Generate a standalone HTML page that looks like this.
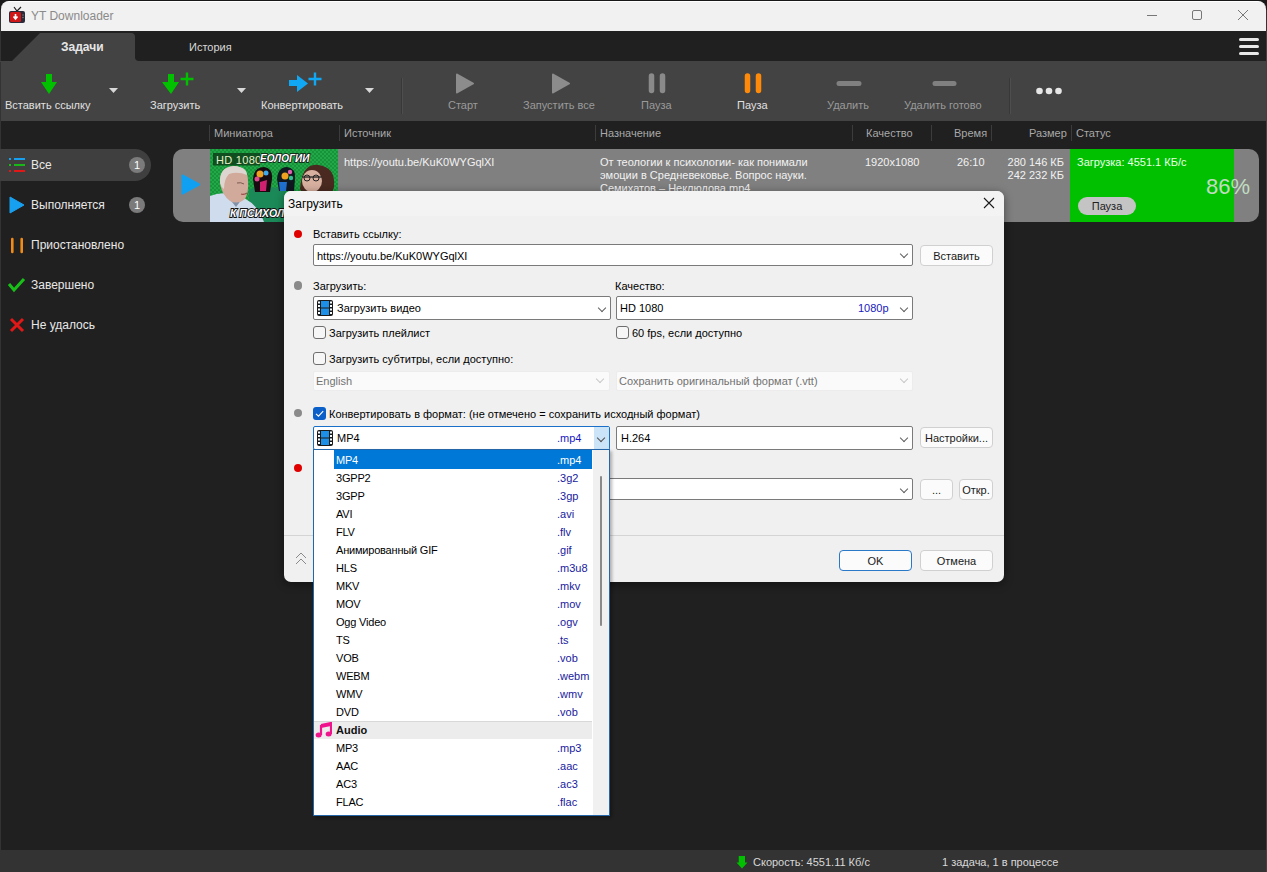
<!DOCTYPE html>
<html><head><meta charset="utf-8">
<style>
*{margin:0;padding:0;box-sizing:border-box}
html,body{width:1267px;height:872px;overflow:hidden;background:#333}
body{position:relative;font-family:"Liberation Sans",sans-serif;font-size:11px;line-height:13px}
.a{position:absolute;white-space:nowrap}
.tl{color:#e0e0e0;top:99px}
.td{color:#9a9a9a}
.hd{color:#a8a8a8;top:127px}
.sep{position:absolute;top:125px;width:1px;height:16px;background:#3c3c3c}
.side{color:#e8e8e8;font-size:12px;line-height:14px;left:31px}
.badge{position:absolute;width:16px;height:16px;border-radius:8px;background:#7b7b7b;color:#fff;font-size:11px;text-align:center;line-height:16px}
.rt{color:#f2f2f2}
.lbl{color:#000}
.cb{position:absolute;background:#fff;border:1px solid #7a7a7a;border-radius:2px}
.chev{position:absolute;width:6px;height:6px;border-right:1px solid #606060;border-bottom:1px solid #606060;transform:rotate(45deg)}
.btn{position:absolute;background:#fbfbfb;border:1px solid #d0d0d0;border-radius:4px;color:#1a1a1a;text-align:center}
.chk{position:absolute;width:13px;height:13px;border:1px solid #6e6e6e;border-radius:3px;background:#f6f6f6}
.dot{position:absolute;width:8.6px;height:8.6px;border-radius:50%}
.li{position:absolute;left:336px;color:#000;letter-spacing:-.2px}
.ext{position:absolute;left:557px;color:#1a1aa0}
</style></head><body>
<!-- title bar -->
<div class="a" style="left:0;top:0;width:1267px;height:1px;background:#181818"></div><div class="a" style="left:0;top:0;width:10px;height:10px;background:#181818"></div><div class="a" style="left:1257px;top:0;width:10px;height:10px;background:#181818"></div><div class="a" style="left:1px;top:1px;width:1265px;height:30px;background:#f1f1f1;border-top:1px solid #fff;border-radius:8px 8px 0 0"></div>
<svg class="a" style="left:8px;top:6px" width="18" height="18" viewBox="0 0 18 18">
 <path d="M6 1 L9 5 L13 1" stroke="#222" stroke-width="1.2" fill="none"/>
 <rect x="1" y="5" width="16" height="12" rx="2" fill="#2a2a3a"/>
 <rect x="2" y="6" width="11" height="10" rx="1.5" fill="#d01818"/>
 <path d="M7.5 8 V12 M5.5 10.5 L7.5 13 L9.5 10.5" stroke="#fff" stroke-width="1.6" fill="none"/>
 <circle cx="15" cy="9" r=".7" fill="#888"/><circle cx="15" cy="11.5" r=".7" fill="#888"/>
</svg>
<div class="a" style="left:31px;top:9px;font-size:12px;line-height:14px;color:#8a8a8a">YT Downloader</div>
<div class="a" style="left:1147px;top:15px;width:10px;height:1px;background:#777"></div>
<div class="a" style="left:1192px;top:10px;width:10px;height:10px;border:1px solid #777;border-radius:2px"></div>
<svg class="a" style="left:1237px;top:9px" width="12" height="12"><path d="M1 1 L11 11 M11 1 L1 11" stroke="#777" stroke-width="1"/></svg>

<!-- tab bar -->
<div class="a" style="left:1px;top:31px;width:1265px;height:30px;background:#202020"></div>
<svg class="a" style="left:0;top:31px" width="150" height="31">
 <path d="M12 30 L40 2 L131 2 Q135 2 135 6 L135 26 Q135 30 139 30 L150 30 L150 31 L0 31 L0 30 Z" fill="#434343"/>
</svg>
<div class="a" style="left:61px;top:40px;font-size:12px;line-height:14px;font-weight:bold;color:#e6e6e6">Задачи</div>
<div class="a" style="left:189px;top:41px;color:#d8d8d8">История</div>
<div class="a" style="left:1239px;top:38px;width:20px;height:3px;border-radius:2px;background:#e8e8e8"></div>
<div class="a" style="left:1239px;top:45px;width:20px;height:3px;border-radius:2px;background:#e8e8e8"></div>
<div class="a" style="left:1239px;top:52px;width:20px;height:3px;border-radius:2px;background:#e8e8e8"></div>

<!-- toolbar -->
<div class="a" style="left:1px;top:61px;width:1265px;height:60px;background:#434343"></div>
<svg class="a" style="left:0;top:61px" width="1267" height="60">
 <g fill="#00c000">
  <path d="M46 13 H52 V21 H57 L49 33 L41 21 H46 Z"/>
  <path d="M168 13 H174 V21 H179 L171 33 L162 21 H168 Z"/>
  <path d="M185.8 11.5 H188.2 V16.8 H193.5 V19.2 H188.2 V24.5 H185.8 V19.2 H180.5 V16.8 H185.8 Z"/>
 </g>
 <g fill="#10a8f5">
  <path d="M289 19 H297 V14 L308 22.5 L297 31 V25 H289 Z"/>
  <path d="M313.8 11.5 H316.2 V16.8 H321.5 V19.2 H316.2 V24.5 H313.8 V19.2 H308.5 V16.8 H313.8 Z"/>
 </g>
 <g fill="#d8d8d8">
  <path d="M109 27 H118 L113.5 32 Z"/>
  <path d="M237 27 H246 L241.5 32 Z"/>
  <path d="M365 27 H374 L369.5 32 Z"/>
 </g>
 <rect x="401" y="17" width="1" height="36" fill="#383838"/><rect x="402" y="17" width="1" height="36" fill="#4e4e4e"/>
 <rect x="1009" y="17" width="1" height="36" fill="#383838"/><rect x="1010" y="17" width="1" height="36" fill="#4e4e4e"/>
 <g fill="#8c8c8c" stroke="#8c8c8c" stroke-width="2" stroke-linejoin="round">
  <path d="M457 13.5 L473 22.5 L457 31.5 Z"/>
  <path d="M553 13.5 L569 22.5 L553 31.5 Z"/>
 </g>
 <g stroke="#8a8a8a" stroke-width="5.5" stroke-linecap="round">
  <path d="M651.5 15 V29.5 M662.5 15 V29.5"/>
 </g>
 <g stroke="#ff8a0a" stroke-width="5.5" stroke-linecap="round">
  <path d="M747.5 15 V29.5 M758.5 15 V29.5"/>
 </g>
 <g stroke="#808080" stroke-width="5" stroke-linecap="round">
  <path d="M839 22.5 H859 M935 22.5 H954"/>
 </g>
 <g fill="#e6e6e6">
  <circle cx="1039.5" cy="30" r="3.3"/><circle cx="1049" cy="30" r="3.3"/><circle cx="1058.5" cy="30" r="3.3"/>
 </g>
</svg>
<div class="a tl" style="left:5px">Вставить ссылку</div>
<div class="a tl" style="left:150px">Загрузить</div>
<div class="a tl" style="left:261px">Конвертировать</div>
<div class="a tl td" style="left:448px">Старт</div>
<div class="a tl td" style="left:523px">Запустить все</div>
<div class="a tl td" style="left:641px">Пауза</div>
<div class="a tl" style="left:737px">Пауза</div>
<div class="a tl td" style="left:827px">Удалить</div>
<div class="a tl td" style="left:904px">Удалить готово</div>

<!-- main area -->
<div class="a" style="left:1px;top:121px;width:1265px;height:729px;background:#202020"></div>
<div class="a" style="left:1266px;top:31px;width:1px;height:841px;background:#454040"></div>
<div class="a hd" style="left:214px">Миниатюра</div>
<div class="a hd" style="left:344px">Источник</div>
<div class="a hd" style="left:600px">Назначение</div>
<div class="a hd" style="left:866px">Качество</div>
<div class="a hd" style="left:954px">Время</div>
<div class="a hd" style="left:1029px">Размер</div>
<div class="a hd" style="left:1076px">Статус</div>
<div class="sep" style="left:209px"></div>
<div class="sep" style="left:339px"></div>
<div class="sep" style="left:595px"></div>
<div class="sep" style="left:852px"></div>
<div class="sep" style="left:931px"></div>
<div class="sep" style="left:991px"></div>
<div class="sep" style="left:1071px"></div>

<!-- sidebar -->
<div class="a" style="left:0;top:149px;width:151px;height:32px;background:#3f3f3f;border-radius:0 16px 16px 0"></div>
<svg class="a" style="left:0;top:149px" width="30" height="200">
 <g stroke-width="2.2" stroke-linecap="butt">
  <path d="M9 10 H11 M14 10 H25" stroke="#18a0f0"/>
  <path d="M9 16 H11 M14 16 H25" stroke="#18b818"/>
  <path d="M9 22 H11 M14 22 H25" stroke="#e01818"/>
 </g>
 <path d="M10 48 L24 56 L10 64 Z" fill="#18a0f0" stroke="#18a0f0" stroke-width="1" stroke-linejoin="round"/>
 <path d="M12.3 90 V103 M21.7 90 V103" stroke="#f08a18" stroke-width="2.6" stroke-linecap="round"/>
 <path d="M9 135 L14 141 L24 130" stroke="#18c018" stroke-width="3" fill="none"/>
 <path d="M11 170 L23 182 M23 170 L11 182" stroke="#e01818" stroke-width="3"/>
</svg>
<div class="a side" style="top:158px">Все</div>
<div class="a side" style="top:198px">Выполняется</div>
<div class="a side" style="top:238px">Приостановлено</div>
<div class="a side" style="top:278px">Завершено</div>
<div class="a side" style="top:318px">Не удалось</div>
<div class="badge" style="left:129px;top:157px">1</div>
<div class="badge" style="left:129px;top:197px">1</div>

<!-- task row -->
<div class="a" style="left:173px;top:149px;width:1086px;height:73px;background:#808080;border-radius:10px"></div>
<svg class="a" style="left:180px;top:173px" width="22" height="22"><path d="M2.5 2.5 L19 11.5 L2.5 20.5 Z" fill="#10a0f2" stroke="#10a0f2" stroke-width="2" stroke-linejoin="round"/></svg>
<svg class="a" style="left:210px;top:149px" width="128" height="73" viewBox="0 0 128 73">
 <defs><pattern id="ck" width="4" height="4" patternUnits="userSpaceOnUse"><rect width="4" height="4" fill="#22a848"/><rect width="2" height="2" fill="#17943a"/><rect x="2" y="2" width="2" height="2" fill="#17943a"/></pattern></defs>
 <rect width="128" height="73" fill="url(#ck)"/>
 <path d="M39 40 Q56 36 75 40 L75 73 L39 73 Z" fill="#1b8a58"/>
 <path d="M90 40 Q92 14 108 16 Q126 18 124 38 L122 44 L92 44 Z" fill="#4a2a20"/>
 <ellipse cx="102" cy="32" rx="10" ry="11" fill="#d8b0a0"/>
 <path d="M92 28 H112" stroke="#222" stroke-width="1.3"/>
 <circle cx="97" cy="29" r="3" fill="none" stroke="#222" stroke-width="1"/><circle cx="106" cy="29" r="3" fill="none" stroke="#222" stroke-width="1"/>
 <path d="M45 43 L43 30 Q44 18 54 18 Q63 19 62 30 L60 43 Z" fill="#180c10"/>
 <circle cx="50" cy="25" r="3.5" fill="#f0a020"/><circle cx="47" cy="30" r="2.5" fill="#e04890"/><circle cx="56" cy="24" r="2.5" fill="#40a8e8"/><path d="M50 33 L57 31 L56 42 L50 42 Z" fill="#d02070"/>
 <path d="M69 42 L67 30 Q68 18 77 18 Q86 19 85 30 L84 42 Z" fill="#101820"/>
 <circle cx="75" cy="27" r="3.5" fill="#f0a020"/><circle cx="80" cy="23" r="2.2" fill="#e060b0"/><circle cx="81" cy="29" r="2.2" fill="#30c090"/><path d="M69 33 L77 33 L76 42 L70 42 Z" fill="#2070d0"/>
 <path d="M0 47 Q12 42 24 46 Q46 50 54 73 L0 73 Z" fill="#cfdcee"/>
 <path d="M18 48 L26 58 L32 50 Z" fill="#8090a8"/>
 <path d="M10 34 Q9 18 24 17 Q38 18 38 32 Q39 42 35 50 Q28 56 20 52 Q12 46 10 34 Z" fill="#d2aa9c"/>
 <path d="M10 34 Q9 18 24 17 Q37 18 37 26 Q28 22 19 25 Q14 30 14 40 Q11 38 10 34 Z" fill="#ddd6d0"/>
 <path d="M27 34 Q31 33 34 35" stroke="#7a5a50" stroke-width="1" fill="none"/>
 <path d="M31 45 Q34 46 37 44" stroke="#9a4a4a" stroke-width="1.2" fill="none"/>
 <rect x="3" y="4" width="47" height="12.5" fill="#0d3a18" opacity=".8"/>
 <text x="6" y="14.5" font-family="Liberation Sans" font-size="11" fill="#e8f0c8" letter-spacing=".3">HD 1080</text>
 <text x="50" y="12.5" font-family="Liberation Sans" font-size="10" font-weight="bold" font-style="italic" fill="#fff" stroke="#111" stroke-width="1.6" paint-order="stroke">ЕОЛОГИИ</text>
 <text x="20" y="68" font-family="Liberation Sans" font-size="10.5" font-weight="bold" font-style="italic" fill="#fff" stroke="#111" stroke-width="1.8" paint-order="stroke">К ПСИХОЛ</text>
</svg>
<div class="a rt" style="left:344px;top:156px">https://youtu.be/KuK0WYGqlXI</div>
<div class="a rt" style="left:600px;top:156px;line-height:13px">От теологии к психологии- как понимали<br>эмоции в Средневековье. Вопрос науки.<br>Семихатов – Неклюдова.mp4</div>
<div class="a rt" style="left:865px;top:156px">1920x1080</div>
<div class="a rt" style="left:957px;top:156px">26:10</div>
<div class="a rt" style="left:1000px;top:156px;width:64px;text-align:right">280 146 КБ<br>242 232 КБ</div>
<div class="a" style="left:1070px;top:149px;width:164px;height:73px;background:#00c000"></div>
<div class="a" style="left:1077px;top:156px;color:#e8ffe8">Загрузка: 4551.1 КБ/с</div>
<div class="a" style="left:1206px;top:175px;font-size:22px;line-height:24px;color:#c0dcc0">86%</div>
<div class="a" style="left:1078px;top:197px;width:58px;height:18px;border-radius:9px;background:#c4c4c4;color:#222;text-align:center;line-height:18px">Пауза</div>

<!-- status bar -->
<div class="a" style="left:1px;top:850px;width:1265px;height:22px;background:#333333"></div>
<svg class="a" style="left:736px;top:856px" width="12" height="14"><path d="M2.7 0 H9 V6.5 H11.5 L6 12.5 L0.5 6.5 H2.7 Z" fill="#00c000"/></svg>
<div class="a" style="left:753px;top:856px;color:#d8d8d8">Скорость: 4551.11 Кб/с</div>
<div class="a" style="left:942px;top:856px;color:#d8d8d8">1 задача, 1 в процессе</div>

<!-- dialog -->
<div id="dlg" class="a" style="left:284px;top:191px;width:720px;height:391px;background:#f0f0f0;border-radius:7px;box-shadow:0 2px 10px rgba(0,0,0,.45)"></div>
<div class="a" style="left:284px;top:191px;width:720px;height:25px;background:#f3f3f3;border-radius:7px 7px 0 0"></div>
<svg width="0" height="0" style="position:absolute"><defs><g id="film"><rect x="0" y="0" width="16" height="16" rx="2" fill="#1a1a1a"/><rect x="4" y="1" width="8" height="6.5" fill="#1e8fe6"/><rect x="4" y="8.5" width="8" height="6.5" fill="#1e8fe6"/><g fill="#fff"><rect x="1" y="1.5" width="2" height="2"/><rect x="1" y="5" width="2" height="2"/><rect x="1" y="8.5" width="2" height="2"/><rect x="1" y="12" width="2" height="2"/><rect x="13" y="1.5" width="2" height="2"/><rect x="13" y="5" width="2" height="2"/><rect x="13" y="8.5" width="2" height="2"/><rect x="13" y="12" width="2" height="2"/></g></g></defs></svg>

<div class="a" style="left:288px;top:197px;font-size:12px;line-height:14px;color:#000">Загрузить</div>
<svg class="a" style="left:983px;top:197px" width="12" height="12"><path d="M1 1 L11 11 M11 1 L1 11" stroke="#1a1a1a" stroke-width="1.1"/></svg>

<div class="dot" style="left:293.7px;top:229.9px;background:#e00000"></div>
<div class="a lbl" style="left:313px;top:228px">Вставить ссылку:</div>
<div class="cb" style="left:313px;top:244px;width:600px;height:22px"></div>
<div class="a lbl" style="left:317px;top:250px">https://youtu.be/KuK0WYGqlXI</div>
<div class="chev" style="left:901px;top:251px"></div>
<div class="btn" style="left:920px;top:245px;width:73px;height:21px;line-height:21px">Вставить</div>

<div class="dot" style="left:293.5px;top:281.4px;background:#8a8a8a"></div>
<div class="a lbl" style="left:313px;top:280px">Загрузить:</div>
<div class="a lbl" style="left:615px;top:280px">Качество:</div>
<div class="cb" style="left:313px;top:296px;width:298px;height:24px"></div>
<svg class="a film" style="left:317px;top:300px" width="16" height="16"><use href="#film"/></svg>
<div class="a lbl" style="left:337px;top:302px">Загрузить видео</div>
<div class="chev" style="left:599px;top:304.5px"></div>
<div class="cb" style="left:616px;top:296px;width:297px;height:24px"></div>
<div class="a lbl" style="left:620px;top:302px">HD 1080</div>
<div class="a" style="left:858px;top:302px;color:#1818c0">1080p</div>
<div class="chev" style="left:901px;top:304.5px"></div>

<div class="chk" style="left:313px;top:326px"></div>
<div class="a lbl" style="left:329px;top:327px">Загрузить плейлист</div>
<div class="chk" style="left:616px;top:326px"></div>
<div class="a lbl" style="left:632px;top:327px">60 fps, если доступно</div>

<div class="chk" style="left:313px;top:352px"></div>
<div class="a lbl" style="left:329px;top:353px">Загрузить субтитры, если доступно:</div>
<div class="a" style="left:313px;top:371px;width:297px;height:20px;background:#fafafa;border:1px solid #ececec;border-radius:2px"></div>
<div class="a" style="left:316px;top:375px;color:#727272">English</div>
<div class="chev" style="left:597px;top:376px;border-color:#c8c8c8"></div>
<div class="a" style="left:616px;top:371px;width:297px;height:20px;background:#fafafa;border:1px solid #ececec;border-radius:2px"></div>
<div class="a" style="left:619px;top:375px;color:#727272">Сохранить оригинальный формат (.vtt)</div>
<div class="chev" style="left:901px;top:376px;border-color:#c8c8c8"></div>

<div class="dot" style="left:293.7px;top:408.6px;background:#8a8a8a"></div>
<div class="a" style="left:313px;top:407px;width:13px;height:13px;border-radius:3px;background:#0b5fc8"></div>
<svg class="a" style="left:313px;top:407px" width="13" height="13"><path d="M3 6.8 L5.5 9.2 L10.2 4.2" stroke="#fff" stroke-width="1.1" fill="none"/></svg>
<div class="a lbl" style="left:329px;top:408px">Конвертировать в формат: (не отмечено = сохранить исходный формат)</div>
<div class="a" style="left:313px;top:426px;width:297px;height:24px;background:#fff;border:1px solid #1a70c8;border-radius:2px"></div>
<div class="a" style="left:594px;top:427px;width:15px;height:22px;background:#cce4f7"></div>
<svg class="a" style="left:317px;top:430px" width="16" height="16"><use href="#film"/></svg>
<div class="a lbl" style="left:337px;top:432px">MP4</div>
<div class="a" style="left:557px;top:432px;color:#1818c0">.mp4</div>
<div class="chev" style="left:598px;top:435px;border-color:#505050"></div>
<div class="cb" style="left:616px;top:426px;width:297px;height:24px"></div>
<div class="a lbl" style="left:621px;top:432px">H.264</div>
<div class="chev" style="left:901px;top:434.5px"></div>
<div class="btn" style="left:920px;top:427px;width:73px;height:21px;line-height:21px">Настройки...</div>

<div class="dot" style="left:293.6px;top:463.8px;background:#e00000"></div>
<div class="cb" style="left:313px;top:478px;width:600px;height:22px"></div>
<div class="chev" style="left:901px;top:486px"></div>
<div class="btn" style="left:920px;top:479px;width:33px;height:21px;line-height:21px">...</div>
<div class="btn" style="left:959px;top:479px;width:34px;height:21px;line-height:21px">Откр.</div>

<div class="a" style="left:284px;top:535px;width:720px;height:1px;background:#d4d4d4"></div>
<svg class="a" style="left:295px;top:552px" width="12" height="14"><path d="M1 6 L6 1 L11 6 M1 12 L6 7 L11 12" stroke="#8a8a8a" stroke-width="1" fill="none"/></svg>
<div class="btn" style="left:839px;top:550px;width:73px;height:21px;line-height:20px;border:1.5px solid #2a78c8">OK</div>
<div class="btn" style="left:920px;top:550px;width:73px;height:21px;line-height:21px">Отмена</div>

<!-- dropdown list -->
<div class="a" style="left:313px;top:449px;width:297px;height:367px;background:#fff;border:1px solid #2466a8;box-shadow:2px 2px 3px rgba(0,0,0,.28)"></div>
<div class="a" style="left:593px;top:450px;width:16px;height:365px;background:#f0f0f0"></div>
<div class="a" style="left:600px;top:476px;width:2px;height:150px;background:#8a8a8a;border-radius:1px"></div>
<div class="a" style="left:334px;top:450px;width:258px;height:19px;background:#0078d7"></div>
<div class="a" style="left:314px;top:721px;width:278px;height:18px;background:#ececec;border-top:1px solid #d8d8d8"></div>
<svg class="a" style="left:315px;top:722px" width="17" height="16" viewBox="0 0 17 16"><path d="M6 3 L16 1 V12" stroke="#f0148c" stroke-width="2.2" fill="none"/><path d="M6 3 V13" stroke="#f0148c" stroke-width="2.2"/><ellipse cx="3.6" cy="13" rx="3" ry="2.5" fill="#f0148c"/><ellipse cx="13.6" cy="12" rx="3" ry="2.5" fill="#f0148c"/><path d="M6 3 L16 1 V4 L6 6 Z" fill="#f0148c"/></svg>
<div class="a" style="left:336px;top:724px;font-weight:bold;color:#111">Audio</div>
<div class="li" style="top:454px;color:#fff">MP4</div><div class="ext" style="top:454px;color:#fff">.mp4</div>
<div class="li" style="top:472px">3GPP2</div><div class="ext" style="top:472px">.3g2</div>
<div class="li" style="top:490px">3GPP</div><div class="ext" style="top:490px">.3gp</div>
<div class="li" style="top:508px">AVI</div><div class="ext" style="top:508px">.avi</div>
<div class="li" style="top:526px">FLV</div><div class="ext" style="top:526px">.flv</div>
<div class="li" style="top:544px">Анимированный GIF</div><div class="ext" style="top:544px">.gif</div>
<div class="li" style="top:562px">HLS</div><div class="ext" style="top:562px">.m3u8</div>
<div class="li" style="top:580px">MKV</div><div class="ext" style="top:580px">.mkv</div>
<div class="li" style="top:598px">MOV</div><div class="ext" style="top:598px">.mov</div>
<div class="li" style="top:616px">Ogg Video</div><div class="ext" style="top:616px">.ogv</div>
<div class="li" style="top:634px">TS</div><div class="ext" style="top:634px">.ts</div>
<div class="li" style="top:652px">VOB</div><div class="ext" style="top:652px">.vob</div>
<div class="li" style="top:670px">WEBM</div><div class="ext" style="top:670px">.webm</div>
<div class="li" style="top:688px">WMV</div><div class="ext" style="top:688px">.wmv</div>
<div class="li" style="top:706px">DVD</div><div class="ext" style="top:706px">.vob</div>
<div class="li" style="top:742px">MP3</div><div class="ext" style="top:742px">.mp3</div>
<div class="li" style="top:760px">AAC</div><div class="ext" style="top:760px">.aac</div>
<div class="li" style="top:778px">AC3</div><div class="ext" style="top:778px">.ac3</div>
<div class="li" style="top:796px">FLAC</div><div class="ext" style="top:796px">.flac</div>
</body></html>
